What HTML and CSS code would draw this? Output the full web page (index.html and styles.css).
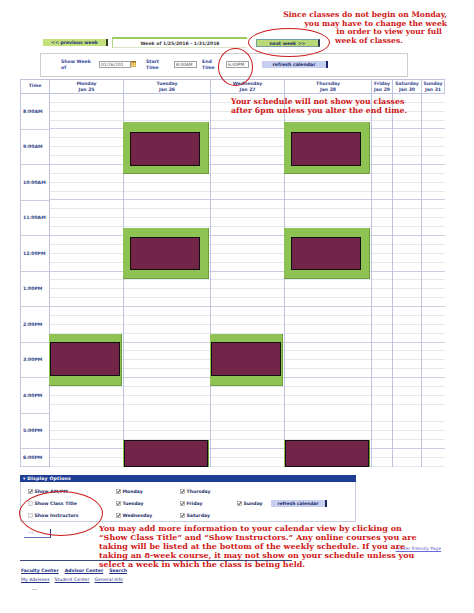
FILE: index.html
```html
<!DOCTYPE html>
<html>
<head>
<meta charset="utf-8">
<title>Weekly Schedule</title>
<link rel="stylesheet" href="styles.css">
</head>
<body>
<div class="page">

  <div class="note note-top">
    <div class="nl nl-1">Since classes do not begin on Monday,</div>
    <div class="nl nl-2">you may have to change the week</div>
    <div class="nl nl-3">in order to view your full</div>
    <div class="nl nl-4">week of classes.</div>
  </div>

  <div class="nav">
    <span class="btn-prev">&lt;&lt; previous week</span>
    <span class="week-box">Week of 1/25/2016 - 1/31/2016</span>
    <span class="btn-next">next week &gt;&gt;</span>
  </div>

  <div class="filter">
    <span class="flabel flabel-week">Show Week<br>of</span>
    <span class="field field-date">01/26/201</span>
    <svg class="cal-icon" viewBox="0 0 5 6" width="5" height="6"><rect x="0" y="0" width="5" height="6" fill="#d9b64a"/><rect x="0" y="0" width="5" height="1.4" fill="#a06a20"/><rect x="1" y="2.3" width="1" height="1" fill="#fff4c0"/><rect x="3" y="2.3" width="1" height="1" fill="#fff4c0"/><rect x="1" y="4" width="1" height="1" fill="#fff4c0"/><rect x="3" y="4" width="1" height="1" fill="#fff4c0"/></svg>
    <span class="flabel flabel-start">Start<br>Time</span>
    <span class="field field-time field-start">8:00AM</span>
    <span class="flabel flabel-end">End<br>Time</span>
    <span class="field field-time field-end">6:00PM</span>
    <span class="btn-refresh">refresh calendar</span>
  </div>

  <div class="calendar">
    <div class="cal-head">
      <div class="hcell">Time</div>
      <div class="hcell">Monday<br>Jan 25</div>
      <div class="hcell">Tuesday<br>Jan 26</div>
      <div class="hcell">Wednesday<br>Jan 27</div>
      <div class="hcell">Thursday<br>Jan 28</div>
      <div class="hcell">Friday<br>Jan 29</div>
      <div class="hcell">Saturday<br>Jan 30</div>
      <div class="hcell">Sunday<br>Jan 31</div>
    </div>
    <div class="cal-body">
      <div class="time-col">
        <div class="tcell">8:00AM</div>
        <div class="tcell">9:00AM</div>
        <div class="tcell">10:00AM</div>
        <div class="tcell">11:00AM</div>
        <div class="tcell">12:00PM</div>
        <div class="tcell">1:00PM</div>
        <div class="tcell">2:00PM</div>
        <div class="tcell">3:00PM</div>
        <div class="tcell">4:00PM</div>
        <div class="tcell">5:00PM</div>
        <div class="tcell tcell-half">6:00PM</div>
      </div>
      <div class="day-col"></div>
      <div class="day-col"></div>
      <div class="day-col"></div>
      <div class="day-col"></div>
      <div class="day-col"></div>
      <div class="day-col"></div>
      <div class="day-col"></div>

      <div class="cls cls-tue cls-9"><div class="cls-in"></div></div>
      <div class="cls cls-thu cls-9"><div class="cls-in"></div></div>
      <div class="cls cls-tue cls-12"><div class="cls-in"></div></div>
      <div class="cls cls-thu cls-12"><div class="cls-in"></div></div>
      <div class="cls cls-mon cls-3"><div class="cls-in"></div></div>
      <div class="cls cls-wed cls-3"><div class="cls-in"></div></div>
      <div class="cls cls-tue cls-530"><div class="cls-in"></div></div>
      <div class="cls cls-thu cls-530"><div class="cls-in"></div></div>
    </div>
  </div>

  <div class="note note-mid">Your schedule will not show you classes<br>after 6pm unless you alter the end time.</div>

  <div class="dopt">
    <div class="dopt-head">&#9662; Display Options</div>
    <div class="dopt-body">
      <span class="opt"><svg class="cb" viewBox="0 0 5 5"><rect x="0.5" y="0.5" width="4" height="4" fill="#fff" stroke="#8a8a8a" stroke-width="0.6"/><path d="M1.1 2.6 L2.1 3.7 L4 1.1" fill="none" stroke="#1a1a1a" stroke-width="0.9"/></svg>Show AM/PM</span>
      <span class="opt"><svg class="cb" viewBox="0 0 5 5"><rect x="0.5" y="0.5" width="4" height="4" fill="#fff" stroke="#8a8a8a" stroke-width="0.6"/><path d="M1.1 2.6 L2.1 3.7 L4 1.1" fill="none" stroke="#1a1a1a" stroke-width="0.9"/></svg>Monday</span>
      <span class="opt"><svg class="cb" viewBox="0 0 5 5"><rect x="0.5" y="0.5" width="4" height="4" fill="#fff" stroke="#8a8a8a" stroke-width="0.6"/><path d="M1.1 2.6 L2.1 3.7 L4 1.1" fill="none" stroke="#1a1a1a" stroke-width="0.9"/></svg>Thursday</span>
      <span></span><span></span>
      <span class="opt"><svg class="cb" viewBox="0 0 5 5"><rect x="0.5" y="0.5" width="4" height="4" fill="#f2f2f2" stroke="#bdbdbd" stroke-width="0.6"/></svg>Show Class Title</span>
      <span class="opt"><svg class="cb" viewBox="0 0 5 5"><rect x="0.5" y="0.5" width="4" height="4" fill="#fff" stroke="#8a8a8a" stroke-width="0.6"/><path d="M1.1 2.6 L2.1 3.7 L4 1.1" fill="none" stroke="#1a1a1a" stroke-width="0.9"/></svg>Tuesday</span>
      <span class="opt"><svg class="cb" viewBox="0 0 5 5"><rect x="0.5" y="0.5" width="4" height="4" fill="#fff" stroke="#8a8a8a" stroke-width="0.6"/><path d="M1.1 2.6 L2.1 3.7 L4 1.1" fill="none" stroke="#1a1a1a" stroke-width="0.9"/></svg>Friday</span>
      <span class="opt"><svg class="cb" viewBox="0 0 5 5"><rect x="0.5" y="0.5" width="4" height="4" fill="#fff" stroke="#8a8a8a" stroke-width="0.6"/><path d="M1.1 2.6 L2.1 3.7 L4 1.1" fill="none" stroke="#1a1a1a" stroke-width="0.9"/></svg>Sunday</span>
      <span class="btn-refresh btn-refresh-sm">refresh calendar</span>
      <span class="opt"><svg class="cb" viewBox="0 0 5 5"><rect x="0.5" y="0.5" width="4" height="4" fill="#f2f2f2" stroke="#bdbdbd" stroke-width="0.6"/></svg>Show Instructors</span>
      <span class="opt"><svg class="cb" viewBox="0 0 5 5"><rect x="0.5" y="0.5" width="4" height="4" fill="#fff" stroke="#8a8a8a" stroke-width="0.6"/><path d="M1.1 2.6 L2.1 3.7 L4 1.1" fill="none" stroke="#1a1a1a" stroke-width="0.9"/></svg>Wednesday</span>
      <span class="opt"><svg class="cb" viewBox="0 0 5 5"><rect x="0.5" y="0.5" width="4" height="4" fill="#fff" stroke="#8a8a8a" stroke-width="0.6"/><path d="M1.1 2.6 L2.1 3.7 L4 1.1" fill="none" stroke="#1a1a1a" stroke-width="0.9"/></svg>Saturday</span>
      <span></span><span></span>
    </div>
  </div>

  <div class="ok-btn">OK</div>

  <div class="print-row"><span class="print-link">Printer Friendly Page</span></div>
  <div class="rule"></div>

  <div class="links links-main">
    <span>Faculty Center</span><span>Advisor Center</span><span>Search</span>
  </div>
  <div class="links links-sub">
    <span>My Advisees</span><span>Student Center</span><span>General Info</span>
  </div>
  <div class="tiny-mark"></div>

  <div class="note note-bottom">You may add more information to your calendar view by clicking on<br>“Show Class Title” and “Show Instructors.” Any online courses you are<br>taking will be listed at the bottom of the weekly schedule. If you are<br>taking an 8-week course, it may not show on your schedule unless you<br>select a week in which the class is being held.</div>

  <div class="ring ring-next"></div>
  <div class="ring ring-end"></div>
  <div class="ring ring-opts"></div>
</div>
</body>
</html>
```

FILE: styles.css
```css
* { box-sizing: border-box; }

body {
  margin: 0;
  background: #ffffff;
  font-family: "DejaVu Sans", Verdana, sans-serif;
}

.page {
  position: relative;
  width: 474px;
  height: 613px;
  overflow: hidden;
}

/* ---------- week navigation ---------- */
.nav {
  display: flex;
  align-items: center;
  height: 11px;
  margin-top: 37px;
  padding-left: 43px;
  font-weight: bold;
  font-size: 4.6px;
}

.btn-prev {
  width: 65px;
  height: 7px;
  line-height: 7px;
  text-align: center;
  background: #c3e07a;
  border-right: 2px solid #2d4418;
  color: #1e2f7a;
}

.week-box {
  margin-left: 4px;
  width: 135px;
  height: 11px;
  line-height: 9px;
  text-align: center;
  border-top: 2px solid #9dca5e;
  border-left: 1px solid #b4d68a;
  border-bottom: 1px solid #d6e6c2;
  color: #3a3a3a;
}

.btn-next {
  margin-left: 9px;
  width: 64px;
  height: 8px;
  line-height: 7px;
  text-align: center;
  background: #b9d978;
  border: 1px solid #6f9fa0;
  border-right: 2px solid #2b3d55;
  color: #1e2f5a;
}

/* ---------- filter panel ---------- */
.filter {
  display: flex;
  align-items: center;
  margin: 5px 0 0 40px;
  width: 368px;
  height: 24px;
  border: 1px solid #cfcfcf;
  padding-left: 20px;
  font-size: 4.6px;
}

.flabel {
  font-weight: bold;
  color: #3548a0;
  line-height: 6px;
}

.flabel-week { width: 38px; }
.flabel-start { margin-left: 10px; width: 28px; }
.flabel-end { margin-left: 5px; width: 24px; }

.field {
  height: 7px;
  line-height: 5px;
  border: 1px solid #a0a0a0;
  background: #ffffff;
  color: #555555;
  padding-left: 1px;
  font-size: 4.4px;
  align-self: center;
  margin-top: -2px;
}

.field-date { width: 32px; }
.field-time { width: 23px; }

.cal-icon { margin: -2px 0 0 0; display: block; }

.btn-refresh {
  margin-left: 13px;
  width: 66px;
  height: 7px;
  line-height: 7px;
  text-align: center;
  background: #c7cff0;
  border-right: 2px solid #1b2a66;
  color: #1b2a66;
  font-weight: bold;
  font-size: 4.6px;
  margin-top: -2px;
}

/* ---------- calendar ---------- */
.calendar {
  margin: 2px 0 0 20px;
  width: 425px;
}

.cal-head,
.cal-body {
  display: grid;
  grid-template-columns: 29px 74px 87px 74px 87px 21px 29px 24px;
}

.cal-head {
  height: 15px;
  border-top: 1px solid #bfc2da;
}

.hcell {
  border-left: 1px solid #c0c3dd;
  border-bottom: 1px solid #c0c3dd;
  text-align: center;
  font-size: 4.6px;
  line-height: 5.6px;
  font-weight: bold;
  color: #3a4a90;
  padding-top: 1px;
}

.hcell:first-child { padding-top: 3px; }
.hcell:last-child { border-right: 1px solid #c0c3dd; }

.cal-body {
  position: relative;
  height: 373px;
  border-bottom: 1px solid #cbcee0;
}

.time-col {
  border-left: 1px solid #c0c3dd;
  display: flex;
  flex-direction: column;
}

.tcell {
  height: 35.5px;
  flex: none;
  border-bottom: 1px solid #cbcee0;
  display: flex;
  align-items: center;
  padding-left: 2px;
  font-size: 4.6px;
  font-weight: bold;
  color: #2e3f86;
}

.tcell-half {
  height: 17.75px;
  border-bottom: 0;
}

.day-col {
  border-left: 1px solid #c0c3dd;
  background-image:
    repeating-linear-gradient(to bottom, transparent 0, transparent 34.5px, #cbcee0 34.5px, #cbcee0 35.5px),
    repeating-linear-gradient(to bottom, transparent 0, transparent 7.875px, #e6e8f1 7.875px, #e6e8f1 8.875px);
}

.day-col:last-child { border-right: 1px solid #c0c3dd; }

/* class blocks (overlay the grid) */
.cls {
  position: absolute;
  width: 86px;
  background: #8ec253;
  border-right: 1px solid #6e9d3c;
  border-bottom: 1px solid #6e9d3c;
}

.cls-in {
  position: absolute;
  background: #722548;
  border: 1px solid #101010;
}

.cls-tue { left: 103px; }
.cls-thu { left: 264px; }
.cls-mon { left: 29px; width: 73px; }
.cls-wed { left: 190px; width: 73px; }

.cls-9 { top: 28px; height: 52px; }
.cls-12 { top: 134px; height: 51px; }
.cls-3 { top: 240px; height: 52px; }
.cls-530 { top: 346px; height: 27px; border-bottom: 0; }

.cls-9 .cls-in { left: 7px; top: 10px; width: 70px; height: 34px; }
.cls-12 .cls-in { left: 7px; top: 9px; width: 70px; height: 33px; }
.cls-3 .cls-in { left: 1px; top: 8px; width: 70px; height: 34px; }
.cls-530 .cls-in { left: 1px; top: 0; width: 84px; height: 27px; }

/* ---------- display options ---------- */
.dopt {
  margin: 8px 0 0 20px;
  width: 336px;
}

.dopt-head {
  height: 7px;
  line-height: 7px;
  background: #1e3d94;
  color: #ffffff;
  font-size: 4.6px;
  font-weight: bold;
  padding-left: 3px;
  letter-spacing: 0.2px;
}

.dopt-body {
  height: 40px;
  border: 1px solid #c9cde0;
  border-top: 0;
  padding: 3px 0 0 7px;
  display: grid;
  grid-template-columns: 88px 64px 57px 34px 60px;
  grid-auto-rows: 12px;
  align-items: center;
  font-size: 4.6px;
  font-weight: bold;
  color: #26306a;
}

.opt {
  display: flex;
  align-items: center;
}

.cb {
  display: block;
  width: 5px;
  height: 5px;
  margin-right: 1.5px;
  flex: none;
}

.btn-refresh-sm {
  margin-left: 0;
  margin-top: 0;
  width: 56px;
  font-size: 4.4px;
}

.ok-btn {
  margin: 7px 0 0 24px;
  width: 27px;
  height: 9px;
  line-height: 8px;
  padding-left: 4px;
  font-size: 4.4px;
  color: #c4c8d8;
  border-right: 1px solid #2c3c8c;
  border-bottom: 1px solid #6070b0;
}

.print-row {
  margin: 8px 0 0 0;
  width: 441px;
  height: 6px;
  text-align: right;
  font-size: 4.4px;
  line-height: 6px;
}

.print-link {
  color: #6a6ad8;
  text-decoration: underline;
}

.rule {
  margin: 8px 0 0 20px;
  width: 272px;
  border-top: 1px solid #3c4878;
}

.links {
  margin-left: 21px;
  display: flex;
  font-size: 4.6px;
  color: #222f80;
  line-height: 7px;
}

.links span { text-decoration: underline; }

.links-main {
  margin-top: 6px;
  font-weight: bold;
  gap: 6px;
}

.links-sub {
  margin-top: 2px;
  gap: 5px;
}

.tiny-mark {
  margin: 6px 0 0 32px;
  width: 5px;
  border-top: 1px solid #c8c8d0;
}

/* ---------- annotations (overlays) ---------- */
.note {
  position: absolute;
  font-family: "DejaVu Serif", "Liberation Serif", serif;
  font-weight: bold;
  color: #d01818;
  white-space: nowrap;
}

.note-top {
  left: 0;
  top: 11px;
  width: 474px;
  font-size: 7.6px;
  line-height: 8.7px;
}

.nl-1, .nl-2 { text-align: right; padding-right: 27px; }
.nl-3 { text-align: right; padding-right: 32px; }
.nl-4 { padding-left: 335px; }

.note-mid {
  left: 231px;
  top: 97px;
  font-size: 7.8px;
  line-height: 9px;
}

.note-bottom {
  left: 99px;
  top: 524px;
  font-size: 8px;
  line-height: 9px;
}

.ring {
  position: absolute;
  border: 1.5px solid #cc1a1a;
  border-radius: 50%;
}

.ring-next { left: 248px; top: 28px; width: 82px; height: 29px; }
.ring-end { left: 218px; top: 48px; width: 35px; height: 38px; }
.ring-opts { left: 19px; top: 491px; width: 84px; height: 45px; }
```
